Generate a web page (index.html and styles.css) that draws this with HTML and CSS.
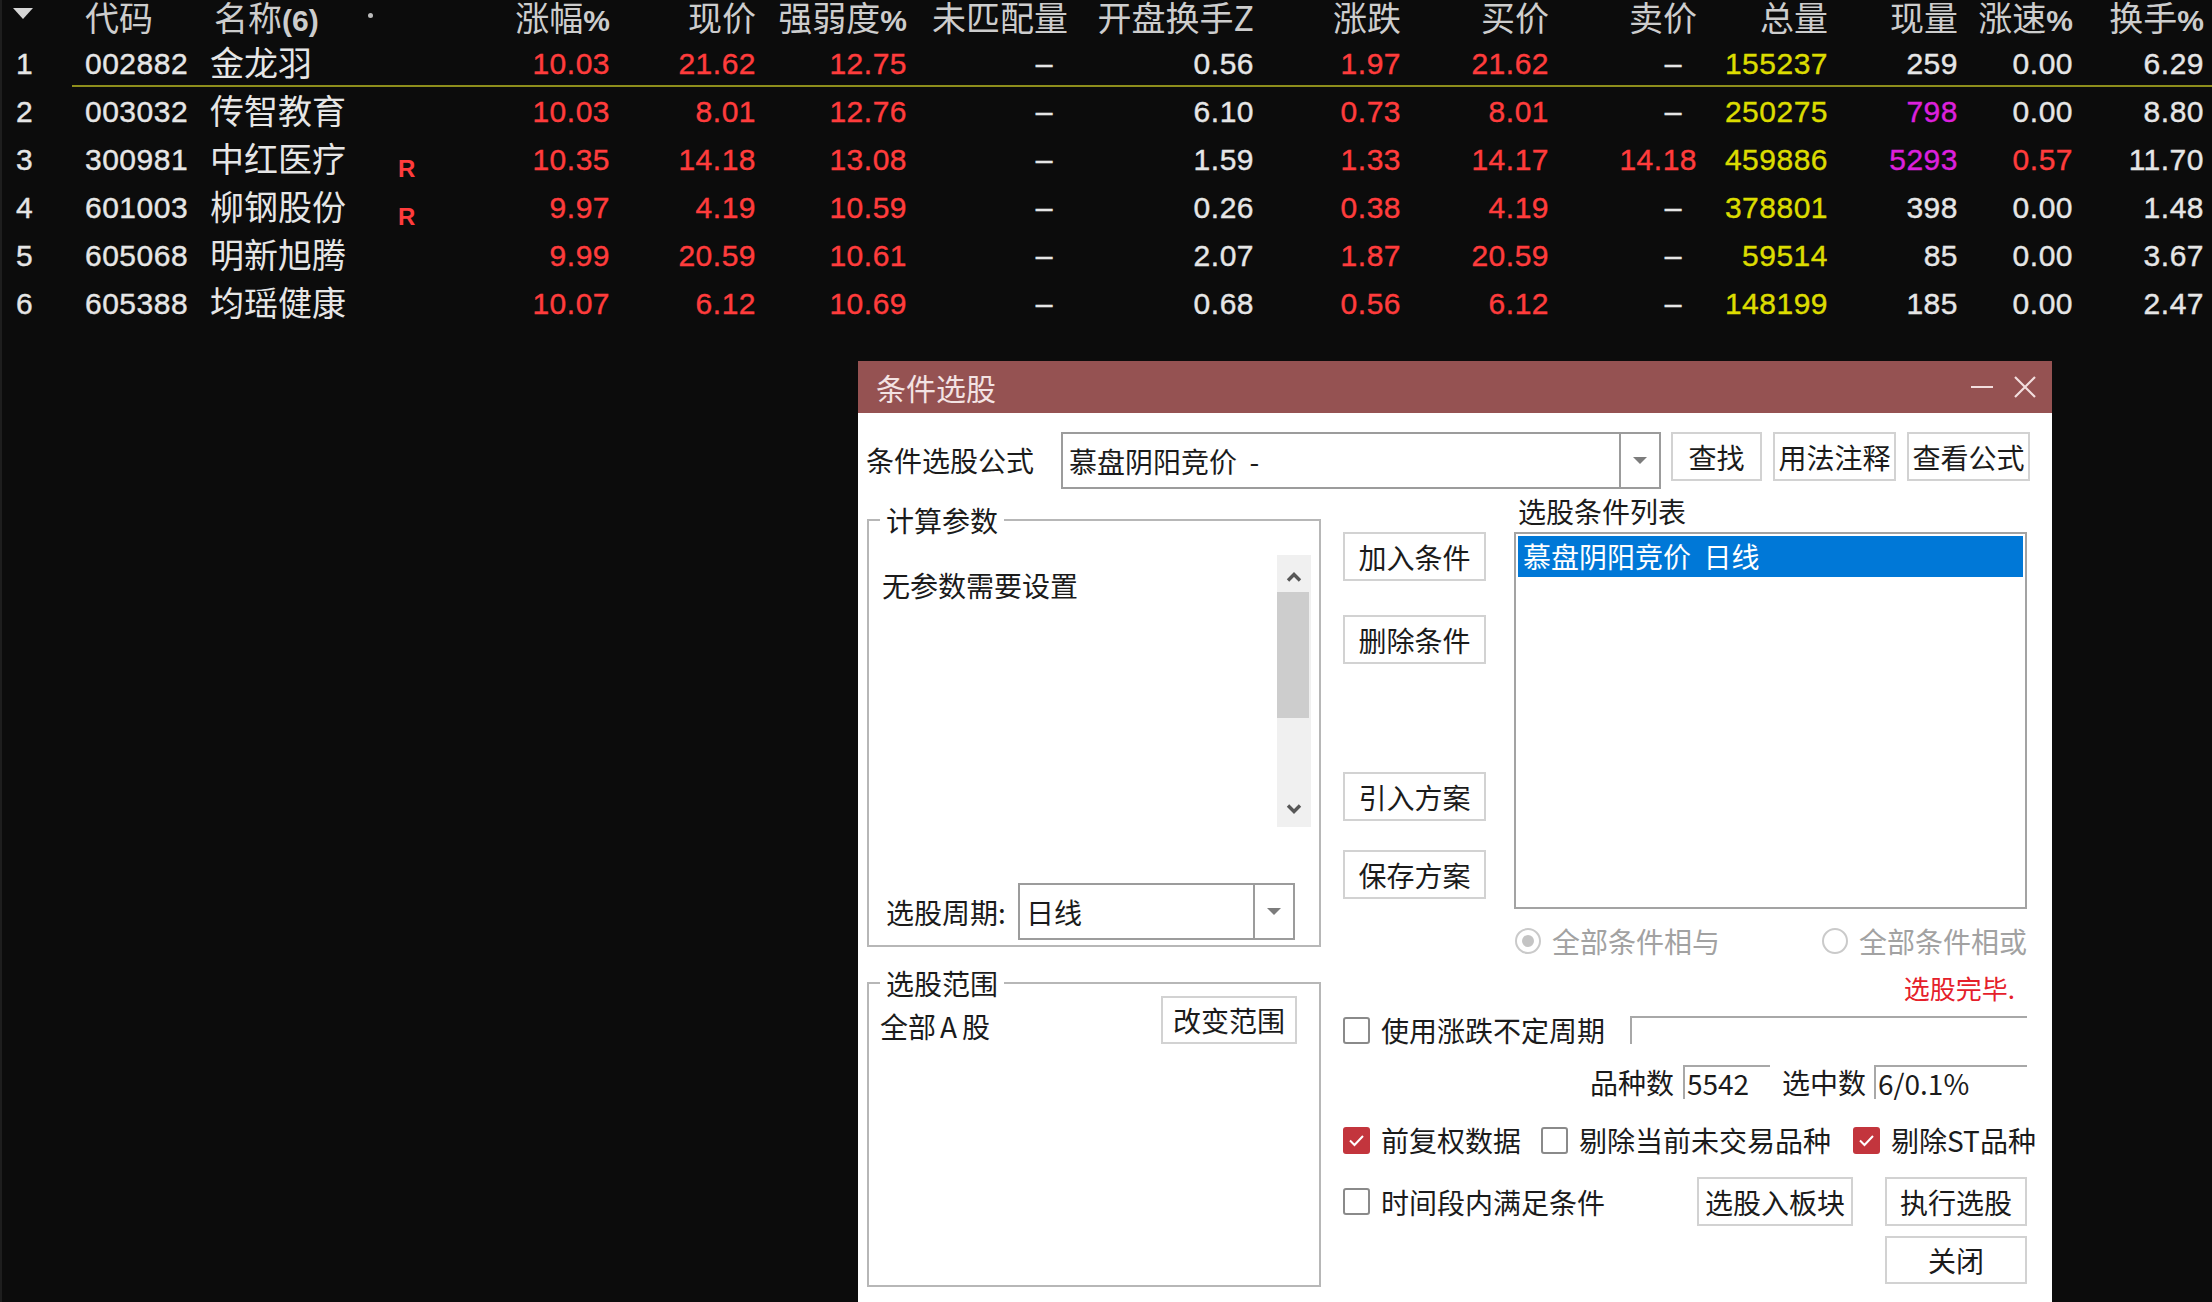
FILE: index.html
```html
<!DOCTYPE html>
<html>
<head>
  <meta charset="utf-8">
  <title>条件选股</title>
  <link rel="stylesheet" href="styles.css">
</head>
<body>

<div class="board">
  <div class="row head">
    <div class="idx"><svg class="sort" width="20" height="12" viewBox="0 0 20 12"><polygon points="0,0 20,0 10,11" fill="#d6d6d6"/></svg></div>
    <div class="code">代码</div>
    <div class="name">名称<b>(6)</b></div>
    <div class="mark"><span class="dot"></span></div>
    <div>涨幅<b>%</b></div>
    <div>现价</div>
    <div>强弱度<b>%</b></div>
    <div>未匹配量</div>
    <div>开盘换手Z</div>
    <div>涨跌</div>
    <div>买价</div>
    <div>卖价</div>
    <div>总量</div>
    <div>现量</div>
    <div>涨速<b>%</b></div>
    <div>换手<b>%</b></div>
  </div>

  <div class="row sel">
    <div class="idx">1</div><div class="code">002882</div><div class="name">金龙羽</div><div class="mark"></div>
    <div class="up">10.03</div><div class="up">21.62</div><div class="up">12.75</div><div class="dash">–</div>
    <div>0.56</div><div class="up">1.97</div><div class="up">21.62</div><div class="dash">–</div>
    <div class="vol">155237</div><div>259</div><div>0.00</div><div>6.29</div>
  </div>
  <div class="row">
    <div class="idx">2</div><div class="code">003032</div><div class="name">传智教育</div><div class="mark"></div>
    <div class="up">10.03</div><div class="up">8.01</div><div class="up">12.76</div><div class="dash">–</div>
    <div>6.10</div><div class="up">0.73</div><div class="up">8.01</div><div class="dash">–</div>
    <div class="vol">250275</div><div class="big">798</div><div>0.00</div><div>8.80</div>
  </div>
  <div class="row">
    <div class="idx">3</div><div class="code">300981</div><div class="name">中红医疗</div><div class="mark"><span class="r">R</span></div>
    <div class="up">10.35</div><div class="up">14.18</div><div class="up">13.08</div><div class="dash">–</div>
    <div>1.59</div><div class="up">1.33</div><div class="up">14.17</div><div class="up">14.18</div>
    <div class="vol">459886</div><div class="big">5293</div><div class="up">0.57</div><div>11.70</div>
  </div>
  <div class="row">
    <div class="idx">4</div><div class="code">601003</div><div class="name">柳钢股份</div><div class="mark"><span class="r">R</span></div>
    <div class="up">9.97</div><div class="up">4.19</div><div class="up">10.59</div><div class="dash">–</div>
    <div>0.26</div><div class="up">0.38</div><div class="up">4.19</div><div class="dash">–</div>
    <div class="vol">378801</div><div>398</div><div>0.00</div><div>1.48</div>
  </div>
  <div class="row">
    <div class="idx">5</div><div class="code">605068</div><div class="name">明新旭腾</div><div class="mark"></div>
    <div class="up">9.99</div><div class="up">20.59</div><div class="up">10.61</div><div class="dash">–</div>
    <div>2.07</div><div class="up">1.87</div><div class="up">20.59</div><div class="dash">–</div>
    <div class="vol">59514</div><div>85</div><div>0.00</div><div>3.67</div>
  </div>
  <div class="row">
    <div class="idx">6</div><div class="code">605388</div><div class="name">均瑶健康</div><div class="mark"></div>
    <div class="up">10.07</div><div class="up">6.12</div><div class="up">10.69</div><div class="dash">–</div>
    <div>0.68</div><div class="up">0.56</div><div class="up">6.12</div><div class="dash">–</div>
    <div class="vol">148199</div><div>185</div><div>0.00</div><div>2.47</div>
  </div>
</div>

<div class="dlg">
  <div class="titlebar">
    <span>条件选股</span>
    <div class="winbtns">
      <i class="min"></i>
      <svg width="24" height="22" viewBox="0 0 24 22"><path d="M2 1 L22 21 M22 1 L2 21" stroke="#f2dede" stroke-width="2.2" fill="none"/></svg>
    </div>
  </div>

  <div class="dlg-body">
    <div class="formula">
      <span class="lbl">条件选股公式</span>
      <div class="combo formula-combo">
        <span class="val">慕盘阴阳竞价&nbsp;&nbsp;-</span>
        <div class="drop"><svg width="14" height="8" viewBox="0 0 14 8"><polygon points="0,0 14,0 7,7" fill="#7c7c7c"/></svg></div>
      </div>
      <button class="btn find">查找</button>
      <button class="btn wide">用法注释</button>
      <button class="btn wide">查看公式</button>
    </div>

    <div class="main">
      <div class="leftcol">
        <fieldset class="grp params">
          <legend>计算参数</legend>
          <div class="paramlist">
            <span class="note">无参数需要设置</span>
            <div class="vscroll">
              <svg width="16" height="12" viewBox="0 0 16 12"><path d="M2 9.5 L8 3.5 L14 9.5" stroke="#575757" stroke-width="3.4" fill="none"/></svg>
              <div class="thumb"></div>
              <svg class="down" width="16" height="12" viewBox="0 0 16 12"><path d="M2 2.5 L8 8.5 L14 2.5" stroke="#575757" stroke-width="3.4" fill="none"/></svg>
            </div>
          </div>
          <div class="period">
            <span class="plabel">选股周期:</span>
            <div class="combo period-combo">
              <span class="val">日线</span>
              <div class="drop"><svg width="14" height="8" viewBox="0 0 14 8"><polygon points="0,0 14,0 7,7" fill="#7c7c7c"/></svg></div>
            </div>
          </div>
        </fieldset>

        <fieldset class="grp range">
          <legend>选股范围</legend>
          <div class="range-row">
            <span class="note">全部<span class="wa">A</span>股</span>
            <button class="btn change">改变范围</button>
          </div>
        </fieldset>
      </div>

      <div class="rightarea">
        <div class="upper">
          <div class="midbtns">
            <button class="btn mid">加入条件</button>
            <button class="btn mid del">删除条件</button>
            <button class="btn mid imp">引入方案</button>
            <button class="btn mid save">保存方案</button>
          </div>
          <div class="listcol">
            <div class="lbl list-title">选股条件列表</div>
            <div class="condlist">
              <div class="item on">慕盘阴阳竞价&nbsp;&nbsp;日线</div>
            </div>
            <div class="radios">
              <label class="radio"><i class="dotbox on"></i>全部条件相与</label>
              <label class="radio"><i class="dotbox"></i>全部条件相或</label>
            </div>
          </div>
        </div>

        <div class="status">选股完毕.</div>

        <div class="opt r1">
          <i class="cb"></i><span>使用涨跌不定周期</span>
          <div class="sunken days"></div>
        </div>
        <div class="opt r2">
          <span>品种数</span><div class="sunken cnt">5542</div>
          <span class="gap">选中数</span><div class="sunken hit">6/0.1%</div>
        </div>
        <div class="opt r3">
          <i class="cb on"><svg width="27" height="27" viewBox="0 0 27 27"><path d="M7 13.5 L11.5 18 L20 9" stroke="#fff" stroke-width="2" fill="none"/></svg></i><span>前复权数据</span>
          <i class="cb sp2"></i><span>剔除当前未交易品种</span>
          <i class="cb on sp3"><svg width="27" height="27" viewBox="0 0 27 27"><path d="M7 13.5 L11.5 18 L20 9" stroke="#fff" stroke-width="2" fill="none"/></svg></i><span>剔除ST品种</span>
        </div>
        <div class="opt r4">
          <i class="cb"></i><span>时间段内满足条件</span>
          <button class="btn block">选股入板块</button>
          <button class="btn run">执行选股</button>
        </div>
        <div class="opt r5">
          <button class="btn run">关闭</button>
        </div>
      </div>
    </div>
  </div>
</div>

</body>
</html>
```

FILE: styles.css
```css
body {
  margin: 0;
  width: 2212px;
  height: 1302px;
  overflow: hidden;
  position: relative;
  background: #0c0c0c;
  box-shadow: inset 2px 0 #1e1e1e;
  font-family: "Noto Sans CJK SC", sans-serif;
}

/* quote board */
.row {
  display: grid;
  grid-template-columns: 72px 133px 155px 80px 170px 146px 151px 161px 186px 147px 148px 148px 131px 130px 115px 131px;
  height: 48px;
  white-space: nowrap;
  font: 30px "Liberation Sans", sans-serif;
  letter-spacing: 0.5px;
  -webkit-text-stroke: 0.4px;
  color: #e6e6e6;
  text-align: right;
}
.row > div {
  padding-top: 5px;
  line-height: 37px;
}
.row.head {
  height: 40px;
  font: 34px "Noto Sans CJK SC", sans-serif;
  letter-spacing: 0;
  -webkit-text-stroke: 0;
  color: #cdcdcd;
}
.row.head > div {
  padding-top: 0;
  line-height: 34px;
}
.head b {
  font: bold 30px "Liberation Sans", sans-serif;
}
.row .idx {
  text-align: left;
  padding-left: 16px;
}
.head .idx {
  padding-left: 13px;
}
.sort {
  vertical-align: top;
  margin-top: 8px;
}
.row .code {
  text-align: left;
  padding-left: 13px;
}
.row > .name {
  text-align: left;
  padding: 0 0 0 5px;
  font: 34px "Noto Sans CJK SC", sans-serif;
  line-height: 44px;
  letter-spacing: 0;
  -webkit-text-stroke: 0;
}
.head > .name {
  padding-left: 9px;
  line-height: 34px;
}
.row > .mark {
  text-align: left;
  padding-top: 0;
}
.dot {
  display: inline-block;
  width: 5px;
  height: 5px;
  border-radius: 50%;
  background: #bcbcbc;
  margin: 13px 0 0 8px;
  vertical-align: top;
}
.r {
  display: block;
  font: bold 24px "Liberation Sans", sans-serif;
  line-height: 24px;
  -webkit-text-stroke: 0;
  color: #ff3c3c;
  padding: 21px 0 0 38px;
}
.up { color: #ff3c3c; }
.vol { color: #dcdc00; }
.big { color: #dc20dc; }
.row > .dash { padding-right: 15px; }
.sel {
  background: linear-gradient(#8e8e1c, #8e8e1c) 72px 45px / 2140px 2px no-repeat;
}

/* dialog window */
.dlg {
  position: absolute;
  left: 858px;
  top: 361px;
  width: 1194px;
  height: 960px;
  background: #fff;
  color: #1b1b1b;
  font-size: 28px;
  white-space: nowrap;
}
.titlebar {
  height: 52px;
  background: #955252;
  color: #f3e3e3;
  font-size: 30px;
  display: flex;
  align-items: center;
  justify-content: space-between;
  padding: 0 15px 0 18px;
}
.winbtns {
  display: flex;
  align-items: center;
  gap: 20px;
}
.min {
  display: block;
  width: 22px;
  height: 2px;
  background: #f2dede;
}
.dlg-body {
  padding: 19px 8px 0;
}
.formula {
  display: flex;
  align-items: flex-start;
  height: 57px;
}
.formula .lbl {
  width: 195px;
  line-height: 57px;
}
.combo {
  box-sizing: border-box;
  height: 57px;
  border: 2px solid #9c9c9c;
  display: flex;
  align-items: center;
}
.combo .val {
  flex: 1;
  padding-left: 6px;
}
.drop {
  width: 38px;
  height: 100%;
  border-left: 2px solid #9c9c9c;
  display: flex;
  align-items: center;
  justify-content: center;
}
.formula-combo {
  width: 600px;
}
.btn {
  box-sizing: border-box;
  height: 49px;
  padding: 0;
  border: 2px solid #d2d2d2;
  background: #fff;
  color: #1b1b1b;
  font: 28px "Noto Sans CJK SC", sans-serif;
  white-space: nowrap;
}
.find {
  width: 91px;
  margin-left: 10px;
}
.wide {
  width: 123px;
  margin-left: 11px;
}
.main {
  display: flex;
  align-items: flex-start;
  margin-top: 2px;
}

/* left groups */
.leftcol {
  width: 454px;
  margin: 16px 0 0 1px;
}
.grp {
  box-sizing: border-box;
  margin: 0;
  padding: 0;
  min-width: 0;
  border: 2px solid #b7b7b7;
}
.grp legend {
  margin-left: 11px;
  padding: 0 6px;
  line-height: 26px;
}
.params {
  height: 440px;
  padding-top: 22px;
}
.paramlist {
  display: flex;
  justify-content: space-between;
  height: 272px;
  margin: 0 8px 0 13px;
}
.note {
  line-height: 40px;
  margin-top: 10px;
}
.wa {
  margin: 0 5px 0 4px;
}
.vscroll {
  width: 34px;
  background: #f0f0f0;
  display: flex;
  flex-direction: column;
  align-items: center;
}
.vscroll svg {
  margin-top: 16px;
}
.thumb {
  align-self: stretch;
  height: 126px;
  margin: 9px 2px 0 0;
  background: #cdcdcd;
}
.vscroll .down {
  margin: auto 0 12px;
}
.period {
  display: flex;
  align-items: center;
  margin-top: 56px;
}
.plabel {
  width: 132px;
  padding-left: 17px;
}
.period-combo {
  width: 277px;
}
.range {
  height: 317px;
  margin-top: 23px;
}
.range-row {
  display: flex;
  justify-content: space-between;
  align-items: flex-start;
  padding: 0 22px 0 11px;
}
.change {
  width: 136px;
  height: 48px;
}

/* right side */
.rightarea {
  width: 684px;
  margin-left: 22px;
}
.upper {
  display: flex;
}
.midbtns {
  width: 144px;
  padding-top: 41px;
  display: flex;
  flex-direction: column;
}
.mid {
  width: 143px;
}
.del { margin-top: 34px; }
.imp { margin-top: 108px; }
.save { margin-top: 29px; }
.listcol {
  width: 513px;
  margin-left: 27px;
}
.list-title {
  line-height: 40px;
  padding-left: 4px;
}
.condlist {
  box-sizing: border-box;
  height: 377px;
  margin-top: 1px;
  border: 2px solid #a3a3a3;
  padding: 2px;
}
.item {
  height: 41px;
  line-height: 41px;
  padding-left: 5px;
}
.item.on {
  background: #0078d7;
  color: #fff;
}
.radios {
  height: 64px;
  display: flex;
  align-items: center;
  justify-content: space-between;
  padding-left: 1px;
  color: #a2a2a2;
}
.radio {
  display: flex;
  align-items: center;
  gap: 11px;
}
.dotbox {
  box-sizing: border-box;
  width: 26px;
  height: 26px;
  border: 2px solid #cacaca;
  border-radius: 50%;
  display: flex;
  align-items: center;
  justify-content: center;
}
.dotbox.on::after {
  content: "";
  width: 12px;
  height: 12px;
  border-radius: 50%;
  background: #c4c4c4;
}
.status {
  height: 30px;
  line-height: 30px;
  font-size: 26px;
  color: #e5202a;
  text-align: right;
  padding-right: 12px;
}
.opt {
  display: flex;
  align-items: center;
}
.cb {
  box-sizing: border-box;
  width: 27px;
  height: 27px;
  border: 2px solid #8a8a8a;
  border-radius: 3px;
  margin-right: 11px;
  flex: none;
}
.cb.on {
  border: none;
  background: #c3353d;
}
.cb svg {
  display: block;
}
.sp2 { margin-left: 20px; }
.sp3 { margin-left: 22px; }
.sunken {
  box-sizing: border-box;
  height: 34px;
  border-top: 2px solid #a8a8a8;
  border-left: 2px solid #a8a8a8;
  padding-left: 2px;
  line-height: 32px;
}
.r1 { height: 54px; }
.days {
  width: 397px;
  height: 28px;
  margin-left: auto;
}
.r2 {
  height: 50px;
  justify-content: flex-end;
}
.cnt {
  width: 87px;
  margin-left: 9px;
}
.gap { margin-left: 12px; }
.hit {
  width: 153px;
  margin-left: 8px;
}
.r3 { height: 66px; }
.r4 { height: 57px; }
.block {
  width: 156px;
  margin-left: auto;
}
.run {
  width: 142px;
  margin-left: 32px;
}
.r5 {
  height: 60px;
  justify-content: flex-end;
}
.r5 .run {
  height: 48px;
  margin-left: 0;
}
```
